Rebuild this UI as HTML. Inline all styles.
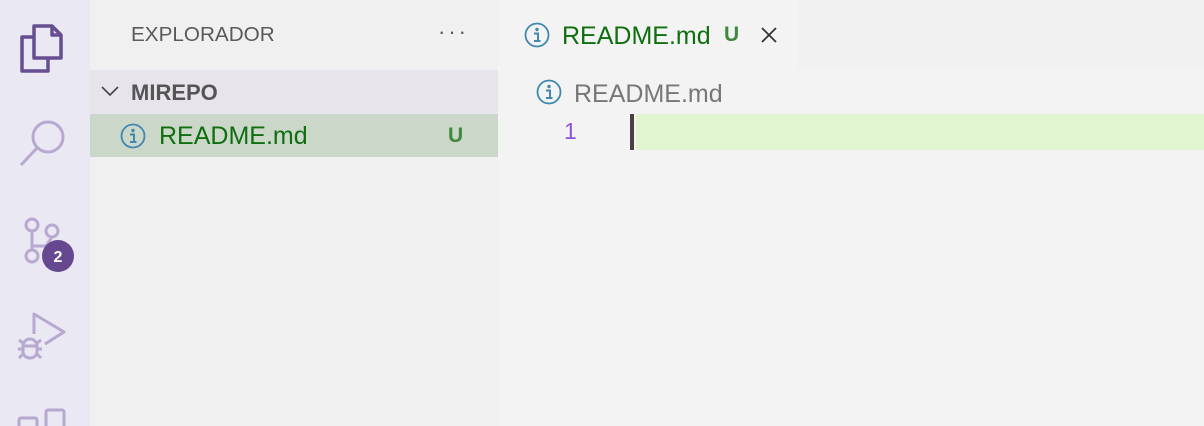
<!DOCTYPE html>
<html><head><meta charset="utf-8"><style>
*{margin:0;padding:0;box-sizing:border-box}
body{width:1204px;height:426px;overflow:hidden;background:#f3f3f3;font-family:"Liberation Sans",sans-serif;position:relative}
.act{position:absolute;left:0;top:0;width:90px;height:426px;background:#e9e8f3}
.side{position:absolute;left:90px;top:0;width:408px;height:426px;background:#f0f0f0}
.tabbar{position:absolute;left:498px;top:0;right:0;height:70px;background:#f1f1f1}
.tab{position:absolute;left:498px;top:0;width:300px;height:70px;background:#f3f3f3}
.abs{position:absolute;white-space:nowrap}
</style></head><body>
<div class="act">
<svg class="abs" style="left:0;top:0" width="90" height="426" fill="none" stroke-linejoin="round">
 <g stroke="#674e91" stroke-width="3.5">
  <path d="M34 26 H52 L61 35 V58 H34 Z"/>
  <path d="M52 26 V35 H61"/>
  <path d="M34 37 H22 V71 H48 V58"/>
 </g>
 <g stroke="#b7a9d0" stroke-width="3">
  <circle cx="48" cy="137" r="15"/>
  <path d="M37 148 L21 165"/>
  <circle cx="32" cy="225" r="6"/><circle cx="32" cy="256" r="6"/><circle cx="52" cy="231" r="6"/>
  <path d="M32 231 V250 M32 246 H46 L52 237"/>
  <path d="M34 334 V314 L64 332 L45 344"/>
  <path d="M23 346 A7 7 0 0 1 37 346 V352 A7 6 0 0 1 23 352 Z"/>
  <path d="M23 346 H37 M19 340 L23 343 M41 340 L37 343 M18 349 H23 M37 349 H42 M19 358 L23 354 M41 358 L37 354"/>
  <rect x="19" y="418" width="18" height="16" rx="2"/>
  <rect x="46" y="410" width="18" height="22" rx="2"/>
 </g>
 <circle cx="58" cy="256" r="16" fill="#65488f"/>
 <text x="58" y="262" fill="#fff" font-family="Liberation Sans" font-weight="bold" font-size="16" text-anchor="middle">2</text>
</svg>
</div>
<div class="side">
 <div class="abs" style="left:41px;top:23px;font-size:20.7px;color:#5a5a5a">EXPLORADOR</div>
 <div class="abs" style="left:348px;top:19px;font-size:22px;color:#555;letter-spacing:3px">···</div>
 <div class="abs" style="left:0;top:70px;width:408px;height:44px;background:#e8e4ec"></div>
 <svg class="abs" style="left:10px;top:84px" width="20" height="14"><path d="M2 3 L10 11 L18 3" stroke="#444" stroke-width="1.6" fill="none"/></svg>
 <div class="abs" style="left:41px;top:80px;font-size:22px;font-weight:bold;color:#555">MIREPO</div>
 <div class="abs" style="left:0;top:114px;width:408px;height:43px;background:#cbd7c9"></div>
 <svg class="abs" style="left:30px;top:123px" width="26" height="26"><circle cx="13" cy="13" r="11.5" fill="none" stroke="#3f88b0" stroke-width="1.8"/><circle cx="13" cy="7.5" r="1.7" fill="#3f88b0"/><path d="M10 11.5 H14 V18.5 M10 19 H16.5" stroke="#3f88b0" stroke-width="2" fill="none"/></svg>
 <div class="abs" style="left:69px;top:122px;font-size:25px;color:#0f6f0f">README.md</div>
 <div class="abs" style="left:358px;top:124px;font-size:21px;font-weight:bold;color:#3f8a3f">U</div>
</div>
<div class="tabbar"></div>
<div class="tab">
 <svg class="abs" style="left:26px;top:22px" width="26" height="26"><circle cx="13" cy="13" r="11.5" fill="none" stroke="#3f88b0" stroke-width="1.8"/><circle cx="13" cy="7.5" r="1.7" fill="#3f88b0"/><path d="M10 11.5 H14 V18.5 M10 19 H16.5" stroke="#3f88b0" stroke-width="2" fill="none"/></svg>
 <div class="abs" style="left:64px;top:22px;font-size:25px;color:#0f6f0f">README.md</div>
 <div class="abs" style="left:226px;top:23px;font-size:21px;font-weight:bold;color:#3f8a3f">U</div>
 <svg class="abs" style="left:262px;top:26px" width="18" height="18"><path d="M2 2 L16 16 M16 2 L2 16" stroke="#333" stroke-width="1.8"/></svg>
</div>
<svg class="abs" style="left:536px;top:79px" width="26" height="26"><circle cx="13" cy="13" r="11.5" fill="none" stroke="#3f88b0" stroke-width="1.8"/><circle cx="13" cy="7.5" r="1.7" fill="#3f88b0"/><path d="M10 11.5 H14 V18.5 M10 19 H16.5" stroke="#3f88b0" stroke-width="2" fill="none"/></svg>
<div class="abs" style="left:574px;top:80px;font-size:25px;color:#777">README.md</div>
<div class="abs" style="left:636px;top:114px;right:0;height:36px;background:#e0f5d0"></div>
<div class="abs" style="left:630px;top:114px;width:4px;height:36px;background:#4a4040"></div>
<div class="abs" style="left:564px;top:118px;font-size:23px;color:#8e55d6">1</div>
</body></html>
